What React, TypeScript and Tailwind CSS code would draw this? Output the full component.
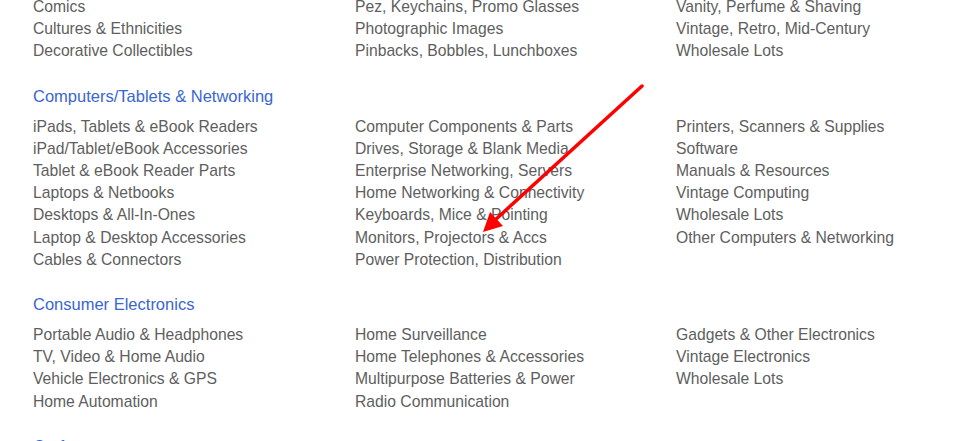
const sections = [
  {
    title: "",
    cols: [
      ["Comics", "Cultures & Ethnicities", "Decorative Collectibles"],
      ["Pez, Keychains, Promo Glasses", "Photographic Images", "Pinbacks, Bobbles, Lunchboxes"],
      ["Vanity, Perfume & Shaving", "Vintage, Retro, Mid-Century", "Wholesale Lots"],
    ],
  },
  {
    title: "Computers/Tablets & Networking",
    cols: [
      [
        "iPads, Tablets & eBook Readers",
        "iPad/Tablet/eBook Accessories",
        "Tablet & eBook Reader Parts",
        "Laptops & Netbooks",
        "Desktops & All-In-Ones",
        "Laptop & Desktop Accessories",
        "Cables & Connectors",
      ],
      [
        "Computer Components & Parts",
        "Drives, Storage & Blank Media",
        "Enterprise Networking, Servers",
        "Home Networking & Connectivity",
        "Keyboards, Mice & Pointing",
        "Monitors, Projectors & Accs",
        "Power Protection, Distribution",
      ],
      [
        "Printers, Scanners & Supplies",
        "Software",
        "Manuals & Resources",
        "Vintage Computing",
        "Wholesale Lots",
        "Other Computers & Networking",
      ],
    ],
  },
  {
    title: "Consumer Electronics",
    cols: [
      ["Portable Audio & Headphones", "TV, Video & Home Audio", "Vehicle Electronics & GPS", "Home Automation"],
      ["Home Surveillance", "Home Telephones & Accessories", "Multipurpose Batteries & Power", "Radio Communication"],
      ["Gadgets & Other Electronics", "Vintage Electronics", "Wholesale Lots"],
    ],
  },
  {
    title: "Crafts",
    cols: [["Art Supplies"], ["Fabric"], ["Scrapbooking & Paper Crafts"]],
  },
];

function App() {
  return (
    <main className="relative w-[973px] h-[441px] overflow-hidden bg-white font-['Liberation_Sans',Arial,sans-serif]">
      <div className="-mt-[4px] pl-[33px]">
        {sections.map((s, i) => (
          <section key={i} className="mb-[22px]">
            {s.title && (
              <h3 className="text-[16.5px] leading-[22px] text-[#3a66cf] mb-[9px] whitespace-nowrap">{s.title}</h3>
            )}
            <div className="grid grid-cols-[322px_321px_1fr]">
              {s.cols.map((col, j) => (
                <ul key={j}>
                  {col.map((item) => (
                    <li key={item} className="text-[15.7px] leading-[22.2px] text-[#5e5e5e] whitespace-nowrap">
                      {item}
                    </li>
                  ))}
                </ul>
              ))}
            </div>
          </section>
        ))}
      </div>

      {/* annotation arrow */}
      <svg className="absolute left-0 top-0 pointer-events-none" width="973" height="441">
        <line x1="642" y1="86" x2="494" y2="221" stroke="#ff0000" strokeWidth="3.5" strokeLinecap="round" />
        <polygon points="483,232 490,212 503,226" fill="#ff0000" />
      </svg>
    </main>
  );
}

export default App;
